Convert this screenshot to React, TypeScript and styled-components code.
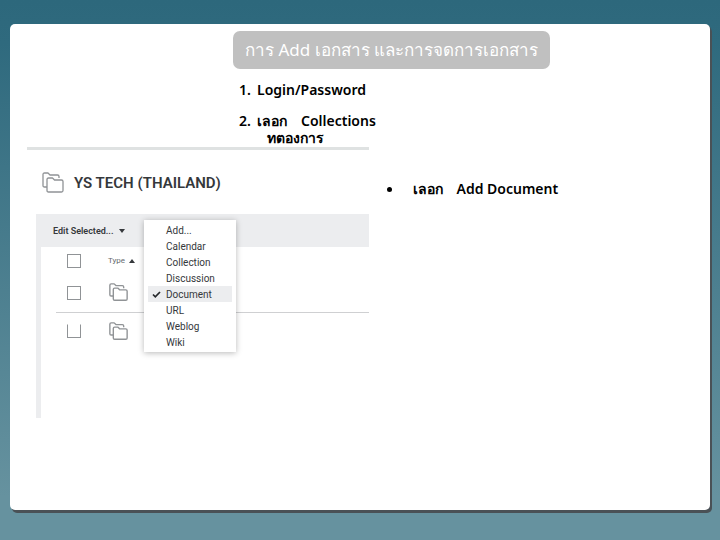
import React from "react";
import styled, { createGlobalStyle } from "styled-components";

const GlobalStyle = createGlobalStyle`
  * { box-sizing: border-box; }
  body { margin: 0; font-family: "Noto Sans", "DejaVu Sans", sans-serif; color: #000; }
`;

const Slide = styled.div`
  display: flex;
  min-height: 100vh;
  padding: 24px 10px 30px;
  background: linear-gradient(180deg, #2d687c 0%, #2f6a7e 8%, #66929f 92%, #66929f 100%);
`;

const Sheet = styled.main`
  flex: 1;
  padding: 7px 0 0 17px;
  border-radius: 5px;
  background: #fff;
  box-shadow: 1px 1px 0 #4a5156, 2px 3px 0 #4a5156;
`;

const Title = styled.h1`
  width: 46%;
  min-width: 317px;
  height: 38px;
  margin: 0 0 12px 206px;
  border-radius: 7px;
  background: #c0c0c0;
  color: #fff;
  font-size: 17px;
  font-weight: 400;
  line-height: 38px;
  text-align: center;
  white-space: nowrap;
`;

const Steps = styled.div`
  display: flex;
  flex-direction: column;
  gap: 13px;
  height: 66px;
  margin-left: 212px;
  font-size: 14px;
  font-weight: 600;
  line-height: 18px;
  white-space: nowrap;
`;

const Step = styled.p`
  margin: 0;
`;

const StepNumber = styled.span`
  display: inline-block;
  width: 18px;
`;

const Verb = styled.span`
  padding-right: 14px;
`;

const StepRest = styled.span`
  display: block;
  padding-left: 28px;
  line-height: 16px;
`;

const Columns = styled.div`
  display: grid;
  grid-template-columns: 1fr 1fr;
  align-items: start;
`;

const Capture = styled.section`
  border-top: 3px solid #dfe2e2;
  font-family: Roboto, sans-serif;
  color: #35383b;
`;

const Heading = styled.h2`
  display: flex;
  align-items: center;
  gap: 10px;
  height: 65px;
  margin: 0 0 -1px;
  padding-left: 15px;
  font-size: 15px;
  font-weight: 600;
`;

const Panel = styled.div`
  height: 204px;
  margin-left: 9px;
  border-left: 5px solid #ecedef;
`;

const Toolbar = styled.div`
  position: relative;
  height: 33px;
  background: #ecedef;
`;

const EditButton = styled.button`
  display: flex;
  align-items: center;
  gap: 6px;
  height: 33px;
  padding: 0 0 0 12px;
  border: 0;
  background: none;
  color: #35383b;
  font: 600 9px Roboto, sans-serif;
`;

const Menu = styled.div`
  position: absolute;
  z-index: 1;
  top: 6px;
  left: 103px;
  display: flex;
  flex-direction: column;
  width: 92px;
  padding: 2px 4px;
  background: #fff;
  box-shadow: 0 1px 6px #00000048;
`;

const MenuItem = styled.button<{ $selected?: boolean }>`
  display: grid;
  grid-template-columns: 14px 1fr;
  align-items: center;
  height: 16px;
  padding: 0 0 0 4px;
  border: 0;
  background: ${(p) => (p.$selected ? "#ecedef" : "none")};
  color: #35383b;
  font: 400 10px Roboto, sans-serif;
  text-align: left;
`;

const Table = styled.table`
  width: calc(100% - 15px);
  margin-left: 15px;
  border-collapse: collapse;
  table-layout: fixed;
`;

const Row = styled.tr<{ $height: number; $line?: boolean }>`
  height: ${(p) => p.$height}px;
  border-bottom: ${(p) => (p.$line ? "1px solid #cfd0d2" : "0")};
`;

const Cell = styled.td<{ $width?: number }>`
  width: ${(p) => (p.$width ? `${p.$width}px` : "auto")};
  padding: 0 0 0 11px;
  vertical-align: middle;
`;

const TypeHead = styled.th`
  padding: 0 0 0 10px;
  color: #666a6e;
  font-size: 8px;
  font-weight: 400;
  text-align: left;
  white-space: pre;
`;

const Check = styled.input<{ $open?: boolean }>`
  display: block;
  appearance: none;
  width: 14px;
  height: 14px;
  margin: 0;
  border: 1px solid #909396;
  border-top-color: ${(p) => (p.$open ? "transparent" : "#909396")};
  background: #fff;
`;

const Actions = styled.ul`
  display: grid;
  gap: 8px;
  margin: 32px 0 0;
  padding: 0 0 0 18px;
  font-size: 14px;
  font-weight: 600;
  line-height: 20px;
  list-style: none;
  white-space: nowrap;
`;

const Action = styled.li`
  display: flex;
  align-items: center;

  &::before {
    content: "";
    width: 5px;
    height: 5px;
    margin-right: 21px;
    border-radius: 50%;
    background: #000;
  }
`;

const Icon = styled.svg`
  display: block;
  flex: none;
`;

const Folders = ({ size, stroke }: { size: number; stroke: number }) => (
  <Icon width={size} height={size} viewBox="0 0 22 22" fill="none" stroke="#909396" strokeWidth={stroke} strokeLinejoin="round" aria-hidden="true">
    <path d="M5 15H2.500Q1 15 1 13.500V2.500Q1 1 2.500 1H6L8 3H15.500Q17 3 17 4.500V6" />
    <path d="M5 18.500V7.500Q5 6 6.500 6H10.500L12.500 8H19.500Q21 8 21 9.500V18.500Q21 20 19.500 20H6.500Q5 20 5 18.500Z" />
  </Icon>
);

const Triangle = ({ up }: { up?: boolean }) => (
  <svg width="6" height="4" viewBox="0 0 6 4" aria-hidden="true">
    <path d={up ? "M0 4 3 0 6 4Z" : "M0 0H6L3 4Z"} fill="#35383b" />
  </svg>
);

const options = ["Add...", "Calendar", "Collection", "Discussion", "Document", "URL", "Weblog", "Wiki"];

export default function App() {
  return (
    <>
      <GlobalStyle />
      <Slide>
        <Sheet>
          <Title>การ Add เอกสาร และการจดการเอกสาร</Title>
          <Steps>
            <Step>
              <StepNumber>1.</StepNumber>Login/Password
            </Step>
            <Step>
              <StepNumber>2.</StepNumber>
              <Verb>เลอก</Verb>Collections
              <StepRest>ทตองการ</StepRest>
            </Step>
          </Steps>
          <Columns>
            <Capture>
              <Heading>
                <Folders size={22} stroke={1.3} />
                YS TECH (THAILAND)
              </Heading>
              <Panel>
                <Toolbar>
                  <EditButton type="button">
                    Edit Selected... <Triangle />
                  </EditButton>
                  <Menu role="listbox" aria-label="Add">
                    {options.map((name) => {
                      const selected = name === "Document";
                      return (
                        <MenuItem key={name} type="button" role="option" aria-selected={selected} $selected={selected}>
                          <span>
                            {selected && (
                              <Icon width="9" height="7" viewBox="0 0 9 7" fill="none" stroke="#25282b" strokeWidth="1.700" aria-hidden="true">
                                <path d="M1 3.500 3.300 5.800 8 1" />
                              </Icon>
                            )}
                          </span>
                          {name}
                        </MenuItem>
                      );
                    })}
                  </Menu>
                </Toolbar>
                <Table>
                  <thead>
                    <Row $height={27}>
                      <Cell $width={42}>
                        <Check type="checkbox" aria-label="Select all" />
                      </Cell>
                      <TypeHead>
                        Type{"  "}
                        <Triangle up />
                      </TypeHead>
                    </Row>
                  </thead>
                  <tbody>
                    <Row $height={38} $line>
                      <Cell>
                        <Check type="checkbox" aria-label="Select first collection" />
                      </Cell>
                      <Cell>
                        <Folders size={19} stroke={1.6} />
                      </Cell>
                    </Row>
                    <Row $height={38}>
                      <Cell>
                        <Check $open type="checkbox" aria-label="Select second collection" />
                      </Cell>
                      <Cell>
                        <Folders size={19} stroke={1.6} />
                      </Cell>
                    </Row>
                  </tbody>
                </Table>
              </Panel>
            </Capture>
            <Actions>
              <Action>
                <Verb>เลอก</Verb>Add Document
              </Action>
            </Actions>
          </Columns>
        </Sheet>
      </Slide>
    </>
  );
}
